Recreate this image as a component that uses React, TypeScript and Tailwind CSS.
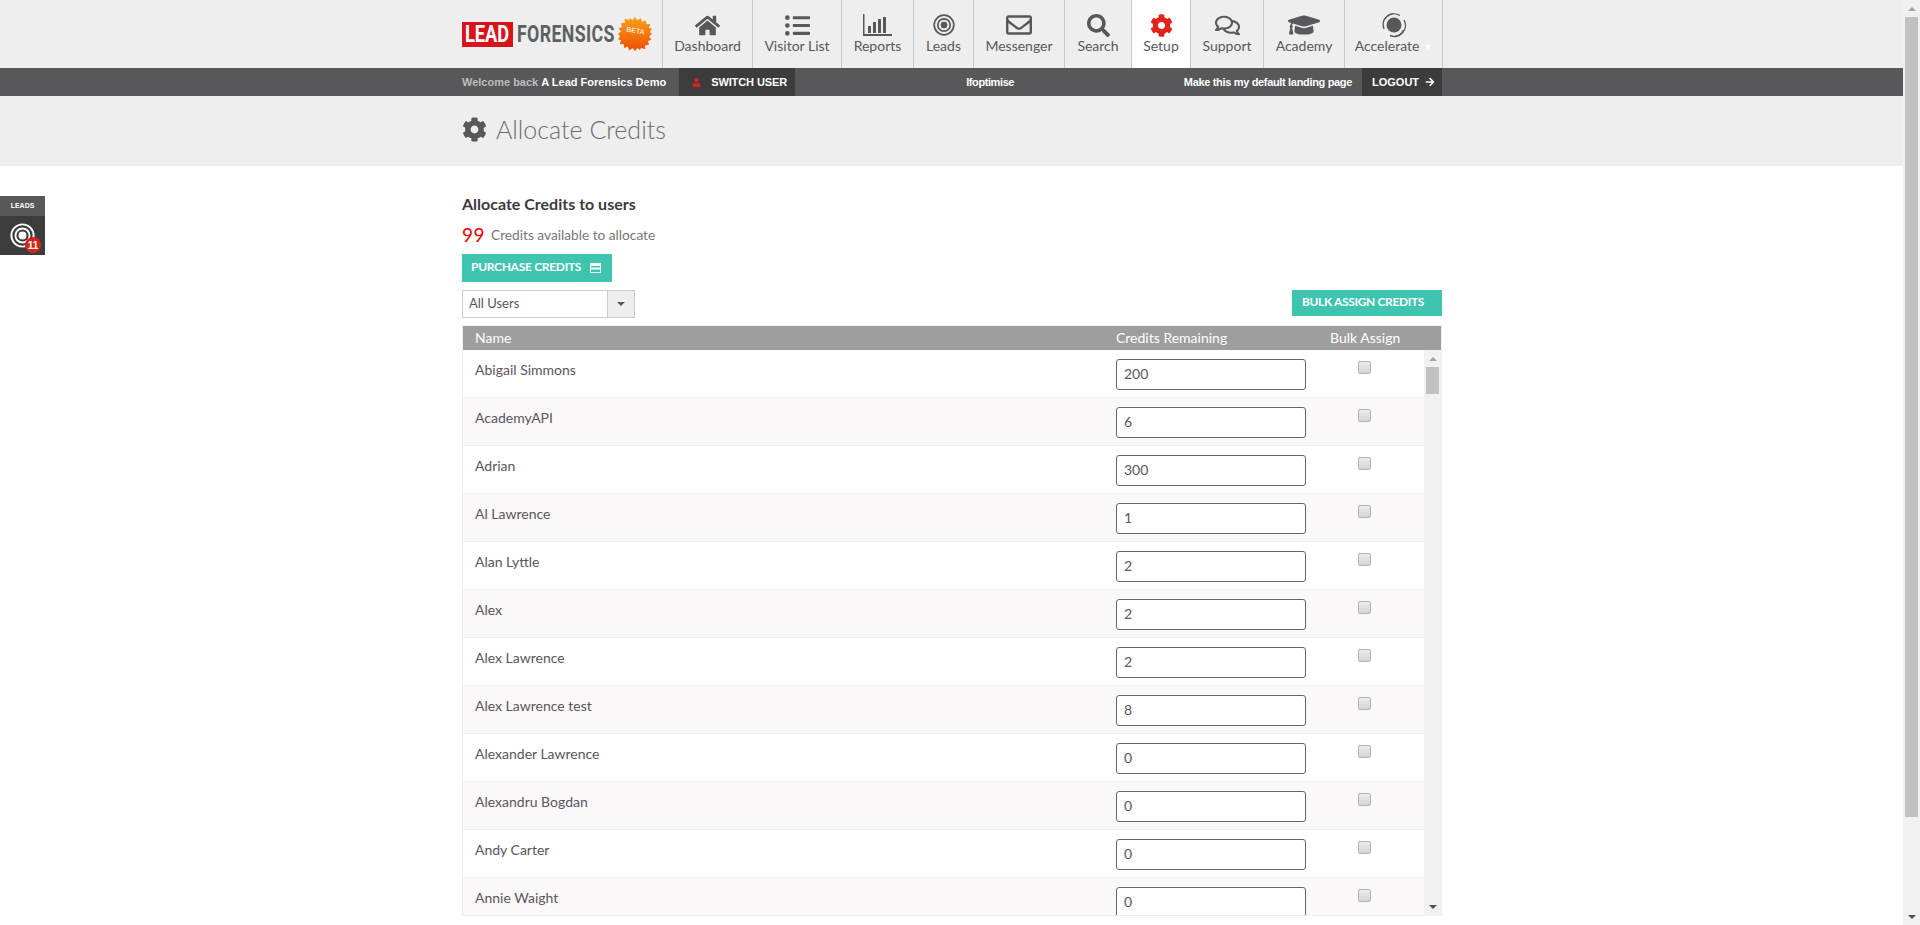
import React from 'react'
import { FaHome, FaListUl, FaRegEnvelope, FaSearch, FaCog, FaRegComments, FaGraduationCap, FaUser, FaArrowRight } from 'react-icons/fa'

const users = [
  ['Abigail Simmons', '200'],
  ['AcademyAPI', '6'],
  ['Adrian', '300'],
  ['Al Lawrence', '1'],
  ['Alan Lyttle', '2'],
  ['Alex', '2'],
  ['Alex Lawrence', '2'],
  ['Alex Lawrence test', '8'],
  ['Alexander Lawrence', '0'],
  ['Alexandru Bogdan', '0'],
  ['Andy Carter', '0'],
  ['Annie Waight', '0'],
]

const ReportsIcon = () => (
  <svg width="29" height="22" viewBox="0 0 29 22" fill="#58585a">
    <path d="M0 0h1.5v20H29v2H0z" />
    <rect x="5" y="12" width="3" height="7" />
    <rect x="10" y="8" width="3" height="11" />
    <rect x="15" y="5" width="3" height="14" />
    <rect x="20" y="3" width="3" height="16" />
  </svg>
)

const TargetIcon = ({ color = '#58585a', size = 22 }: { color?: string; size?: number }) => (
  <svg width={size} height={size} viewBox="0 0 22 22" fill="none" stroke={color}>
    <circle cx="11" cy="11" r="9.8" strokeWidth="1.7" />
    <circle cx="11" cy="11" r="6.2" strokeWidth="1.7" />
    <circle cx="11" cy="11" r="3" fill={color} strokeWidth="1" />
  </svg>
)

const AccelerateIcon = () => (
  <svg width="26" height="26" viewBox="0 0 26 26" fill="none" stroke="#58585a">
    <circle cx="13" cy="13" r="7.5" fill="#58585a" stroke="none" />
    <path d="M3 17A11 11 0 0 1 19 3.5" strokeWidth="1.4" />
    <path d="M23 8A11 11 0 0 1 9 23.5" strokeWidth="1.4" />
    <path d="M22 18A10 10 0 0 1 14 24" strokeWidth="1" />
    <path d="M2 11A11 11 0 0 1 12 1.5" strokeWidth="1" />
  </svg>
)

const navItems: { label: string; width: string; icon: React.ReactNode; active?: boolean; caret?: boolean }[] = [
  { label: 'Dashboard', width: 'w-[90px]', icon: <FaHome size={25} color="#58585a" /> },
  { label: 'Visitor List', width: 'w-[89px]', icon: <FaListUl size={25} color="#58585a" /> },
  { label: 'Reports', width: 'w-[72px]', icon: <ReportsIcon /> },
  { label: 'Leads', width: 'w-[60px]', icon: <TargetIcon /> },
  { label: 'Messenger', width: 'w-[91px]', icon: <FaRegEnvelope size={26} color="#58585a" /> },
  { label: 'Search', width: 'w-[67px]', icon: <FaSearch size={23} color="#58585a" /> },
  { label: 'Setup', width: 'w-[59px]', icon: <FaCog size={23} color="#e2231a" />, active: true },
  { label: 'Support', width: 'w-[73px]', icon: <FaRegComments size={25} color="#58585a" /> },
  { label: 'Academy', width: 'w-[81px]', icon: <FaGraduationCap size={32} color="#58585a" /> },
  { label: 'Accelerate', width: 'w-[98px]', icon: <AccelerateIcon />, caret: true },
]

const Logo = () => (
  <div className="flex items-center w-[200px] shrink-0">
    <div className="w-[51px] h-[25px] shrink-0 bg-[#d7141a] flex items-center justify-center">
      <span className="text-white text-[24px] font-bold leading-none scale-x-[0.76] font-['Roboto',sans-serif]">LEAD</span>
    </div>
    <div className="w-[97px] shrink-0 ml-[4px]">
      <span className="block w-[97px] whitespace-nowrap origin-left scale-x-[0.74] text-[#5b6264] text-[24px] font-bold leading-none tracking-[0.5px] font-['Roboto',sans-serif]">FORENSICS</span>
    </div>
    <svg width="34" height="34" viewBox="0 0 34 34" className="ml-[4px] shrink-0">
      <defs>
        <linearGradient id="burst" x1="0" y1="0" x2="0" y2="1">
          <stop offset="0" stopColor="#f8a11c" />
          <stop offset="1" stopColor="#ee4e04" />
        </linearGradient>
      </defs>
      <polygon
        fill="url(#burst)"
        points="17,0 19.6,3.3 22.6,1 24.3,4.8 27.8,3.2 28.5,7.3 32.3,6.7 31,10.9 34,11.5 32,15 34,17 31,19.6 33.4,22.6 30,24.3 31,27.8 27,28.5 27.3,32.3 23,31 21.9,33 19.6,31 17,34 14.4,31 11.4,33.4 9.7,29.5 6.2,31 5.5,27 1.7,27.3 3,23 0,22.5 2,19.6 0,17 3,14.4 0.6,11.4 4,9.7 3,6.2 7,5.5 6.7,1.7 11,3 12.1,1 14.4,3"
      />
      <text x="17" y="16" textAnchor="middle" fontSize="7" fontWeight="700" fill="#fde3c0" fontFamily="Liberation Sans, sans-serif" transform="rotate(10 17 17)">
        BETA
      </text>
    </svg>
  </div>
)

const Header = () => (
  <div className="h-[68px] bg-[#eeeeee]">
    <div className="w-[980px] ml-[462px] h-full flex items-stretch">
      <Logo />
      <div className="flex border-l border-[#c8c8c8] w-[780px]">
        {navItems.map((item) => (
          <div
            key={item.label}
            className={`${item.width} ${item.active ? 'bg-white' : ''} shrink-0 border-r border-[#c8c8c8] flex flex-col items-center`}
          >
            <div className="h-[36px] mt-[7px] flex items-center justify-center">{item.icon}</div>
            <div className="text-[14px] leading-[18px] mt-[-6px] text-[#58585a] whitespace-nowrap font-['Lato',sans-serif]">
              {item.label}
              {item.caret && <span className="ml-[4px] text-white text-[9px] align-middle">▼</span>}
            </div>
          </div>
        ))}
      </div>
    </div>
  </div>
)

const UserBar = () => (
  <div className="h-[28px] bg-[#58585a] text-[11px] font-bold text-white font-['Liberation_Sans',sans-serif]">
    <div className="w-[980px] ml-[462px] h-full flex items-center">
      <span className="text-[#bdbdbd]">Welcome back</span>
      <span className="ml-[3px]">A Lead Forensics Demo</span>
      <div className="ml-[13px] w-[116px] h-full bg-[#3c3c3c] flex items-center pl-[13px]">
        <FaUser size={9} color="#d7231a" />
        <span className="ml-[10px] tracking-[-0.1px]">SWITCH USER</span>
      </div>
      <span className="ml-[171px] tracking-[-0.4px]">lfoptimise</span>
      <span className="ml-auto mr-[10px] tracking-[-0.33px]">Make this my default landing page</span>
      <div className="w-[80px] h-full bg-[#3c3c3c] flex items-center pl-[10px]">
        <span>LOGOUT</span>
        <FaArrowRight size={10} className="ml-[6px]" />
      </div>
    </div>
  </div>
)

const TitleBand = () => (
  <div className="h-[70px] bg-[#eeeeee]">
    <div className="w-[980px] ml-[462px] h-full flex items-center pb-[3px]">
      <FaCog size={25} color="#58585a" />
      <h1 className="ml-[9px] text-[25px] font-light text-[#6c6c70] font-['Lato',sans-serif]">Allocate Credits</h1>
    </div>
  </div>
)

const SideWidget = () => (
  <div className="absolute left-0 top-[196px] w-[45px]">
    <div className="h-[20px] bg-[#58585a] flex items-center justify-center text-[7px] font-bold text-white font-['Liberation_Sans',sans-serif]">LEADS</div>
    <div className="relative h-[39px] bg-[#3c3c3c] flex items-center justify-center">
      <div className="mr-[1px]">
        <TargetIcon color="#ffffff" size={25} />
      </div>
      <span className="absolute left-[25px] top-[21px] w-[16px] h-[16px] rounded-full bg-[#d7231a] text-white text-[10px] font-bold flex items-center justify-center font-['Liberation_Sans',sans-serif]">11</span>
    </div>
  </div>
)

const Row = ({ name, credits, shaded }: { name: string; credits: string; shaded: boolean }) => (
  <div className={`h-[48px] shrink-0 flex border-b border-[#eeeeee] ${shaded ? 'bg-[#faf8f9]' : 'bg-white'}`}>
    <div className="w-[653px] pl-[12px] pt-[10px] text-[14px] leading-[20px] text-[#5a5560]">{name}</div>
    <div className="w-[242px] pt-[9px]">
      <input
        readOnly
        value={credits}
        className="w-[190px] h-[31px] bg-white border border-[#666666] rounded-[3px] px-[7px] pb-[3px] text-[14px] text-[#5a5560] outline-none"
      />
    </div>
    <div className="pt-[11px]">
      <input
        type="checkbox"
        readOnly
        className="block appearance-none w-[13px] h-[13px] border border-[#b4b4b4] rounded-[2px] bg-gradient-to-b from-[#ececec] to-[#d4d4d4]"
      />
    </div>
  </div>
)

const TableScrollbar = () => (
  <div className="w-[17px] shrink-0 bg-[#f1f1f1] flex flex-col items-center">
    <div className="h-[17px] flex items-center justify-center">
      <div className="w-0 h-0 border-x-[4px] border-x-transparent border-b-[4px] border-b-[#a3a3a3]" />
    </div>
    <div className="w-[13px] h-[27px] bg-[#c1c1c1]" />
    <div className="flex-1" />
    <div className="h-[17px] flex items-center justify-center">
      <div className="w-0 h-0 border-x-[4px] border-x-transparent border-t-[4px] border-t-[#505050]" />
    </div>
  </div>
)

const CreditsTable = () => (
  <div className="mt-[7px] h-[591px] flex flex-col border border-[#eeeeee] overflow-hidden">
    <div className="h-[24px] shrink-0 bg-[#9e9e9e] flex items-center pb-[2px] text-[14px] text-white">
      <div className="w-[653px] pl-[12px]">Name</div>
      <div className="w-[214px]">Credits Remaining</div>
      <div>Bulk Assign</div>
    </div>
    <div className="flex-1 flex min-h-0">
      <div className="flex-1 flex flex-col overflow-hidden">
        {users.map(([name, credits], i) => (
          <Row key={name} name={name} credits={credits} shaded={i % 2 === 1} />
        ))}
      </div>
      <TableScrollbar />
    </div>
  </div>
)

const Content = () => (
  <div className="w-[980px] ml-[462px] pt-[28px] font-['Lato',sans-serif]">
    <h2 className="text-[16px] font-bold leading-[20px] text-[#3c3a3e]">Allocate Credits to users</h2>
    <div className="mt-[10px] h-[22px] flex items-center">
      <span className="text-[19px] text-[#f00000] tracking-[0.5px]">99</span>
      <span className="ml-[6px] text-[13.7px] text-[#77767c]">Credits available to allocate</span>
    </div>
    <button className="mt-[8px] w-[150px] h-[28px] bg-[#3fc4b0] text-white text-[12px] font-bold tracking-[-0.3px] flex items-center pl-[9px] pb-[3px]">
      PURCHASE CREDITS
      <svg width="11" height="10" viewBox="0 0 11 10" className="ml-[9px] mt-[2px]" fill="#ffffff">
        <path d="M0 0h11v10H0zM1 3v1.5h9V3zM1 6.5V9h9V6.5z" fillRule="evenodd" />
      </svg>
    </button>
    <div className="mt-[8px] flex items-start justify-between">
      <div className="w-[173px] h-[28px] border border-[#cccccc] flex bg-white">
        <div className="flex-1 pl-[6px] text-[13px] leading-[25px] text-[#5a5560]">All Users</div>
        <div className="w-[27px] bg-[#eeeeee] border-l border-[#cccccc] flex items-center justify-center">
          <div className="w-0 h-0 border-x-[4px] border-x-transparent border-t-[4px] border-t-[#58585a]" />
        </div>
      </div>
      <button className="w-[150px] h-[26px] bg-[#3fc4b0] text-white text-[12px] font-bold tracking-[-0.35px] text-center pr-[8px] pb-[2px]">BULK ASSIGN CREDITS</button>
    </div>
    <CreditsTable />
  </div>
)

const PageScrollbar = () => (
  <div className="w-[17px] shrink-0 h-[925px] bg-[#f1f1f1] flex flex-col items-end pr-[2px]">
    <div className="h-[17px] w-[13px] flex items-center justify-center">
      <div className="w-0 h-0 border-x-[4px] border-x-transparent border-b-[4px] border-b-[#a3a3a3]" />
    </div>
    <div className="w-[13px] h-[800px] bg-[#c1c1c1]" />
    <div className="flex-1" />
    <div className="h-[17px] w-[13px] flex items-center justify-center">
      <div className="w-0 h-0 border-x-[4px] border-x-transparent border-t-[4px] border-t-[#505050]" />
    </div>
  </div>
)

export default function App() {
  return (
    <div className="relative h-[925px] overflow-hidden flex bg-white font-['Lato',sans-serif]">
      <div className="w-[1903px] shrink-0">
        <Header />
        <UserBar />
        <TitleBand />
        <Content />
      </div>
      <PageScrollbar />
      <SideWidget />
    </div>
  )
}
